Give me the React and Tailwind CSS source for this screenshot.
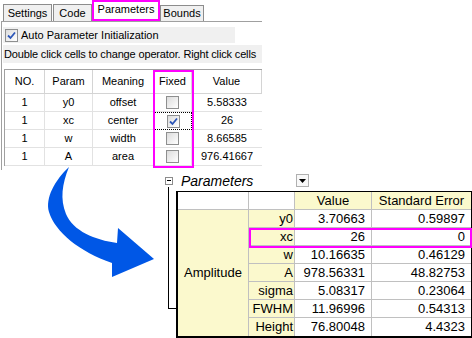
import React from 'react'

const leftRows = [
  { no: 1, param: 'y0', meaning: 'offset', checked: false, value: '5.58333' },
  { no: 1, param: 'xc', meaning: 'center', checked: true, value: '26' },
  { no: 1, param: 'w', meaning: 'width', checked: false, value: '8.66585' },
  { no: 1, param: 'A', meaning: 'area', checked: false, value: '976.41667' },
]

const rightRows = [
  ['y0', '3.70663', '0.59897'],
  ['xc', '26', '0'],
  ['w', '10.16635', '0.46129'],
  ['A', '978.56331', '48.82753'],
  ['sigma', '5.08317', '0.23064'],
  ['FWHM', '11.96996', '0.54313'],
  ['Height', '76.80048', '4.4323'],
]

function CheckBox({ checked }) {
  return (
    <div className="w-[13px] h-[13px] border border-[#8e8f8f] bg-gradient-to-br from-[#dcdcdc] to-[#ffffff] flex items-center justify-center">
      {checked && (
        <svg width="9" height="9" viewBox="0 0 9 9">
          <path d="M1 4.5 L3.5 7 L8 1.5" fill="none" stroke="#2c56b8" strokeWidth="1.8" />
        </svg>
      )}
    </div>
  )
}

function Tab({ label, className }) {
  return (
    <div className={`flex items-center justify-center text-[11px] text-black border border-b-0 border-[#8c8c8c] bg-[#f0f0f0] ${className}`}>
      {label}
    </div>
  )
}

export default function App() {
  return (
    <div className="relative w-[472px] h-[338px] overflow-hidden bg-white font-['Liberation_Sans',Arial,sans-serif]">
      {/* dialog */}
      <div className="w-[262px] h-[170px]">
        <div className="flex items-end h-[21px] pl-[3px]">
          <Tab label="Settings" className="w-[49px] h-[17px]" />
          <Tab label="Code" className="ml-[1px] w-[39px] h-[17px]" />
          <div className="w-[68px] h-[21px] border-2 border-[#ff00ff] bg-white flex items-center justify-center text-[11px] pb-[2px]">Parameters</div>
          <Tab label="Bounds" className="w-[44px] h-[16px]" />
        </div>
        <div className="h-[149px] border-t border-l border-[#a0a0a0] ml-[1px]">
          <div className="ml-[1px] mt-[5px] w-[232px] h-[16px] bg-[#f0f0f0] flex items-center text-[11px]">
            <div className="ml-[2px]"><CheckBox checked /></div>
            <span className="ml-[3px]">Auto Parameter Initialization</span>
          </div>
          <div className="ml-[1px] mt-[2px] h-[18px] bg-[#f0f0f0] flex items-center text-[11px] tracking-[-0.15px] whitespace-nowrap overflow-hidden pl-[1px]">
            Double click cells to change operator. Right click cells
          </div>
          <div className="mt-[6px] ml-[2px] border-t border-l border-[#a0a0a0] grid grid-cols-[40px_48px_61px_38px_70px] text-[11px]">
            {['NO.', 'Param', 'Meaning', 'Fixed', 'Value'].map((h) => (
              <div key={h} className="h-[24px] flex items-center justify-center border-r border-b border-[#d4d4d4] bg-white">{h}</div>
            ))}
            {leftRows.map((r) => (
              <React.Fragment key={r.param}>
                <div className="h-[18px] flex items-center justify-center border-r border-b border-[#e2e2e2]">{r.no}</div>
                <div className="h-[18px] flex items-center justify-center border-r border-b border-[#e2e2e2]">{r.param}</div>
                <div className="h-[18px] flex items-center justify-center border-r border-b border-[#e2e2e2]">{r.meaning}</div>
                <div className={`h-[18px] flex items-center justify-center border-b ${r.checked ? 'border border-dotted border-black' : 'border-r border-[#e2e2e2]'}`}>
                  <CheckBox checked={r.checked} />
                </div>
                <div className="h-[18px] flex items-center justify-center border-b border-[#e2e2e2]">{r.value}</div>
              </React.Fragment>
            ))}
          </div>
        </div>
      </div>

      {/* report table */}
      <div className="flex">
        <div className="w-[160px] shrink-0" />
        <div className="relative w-[312px]">
          <div className="flex items-center h-[21px]">
            <div className="ml-[5px] w-[8px] h-[8px] border border-[#8c8c8c] bg-white flex items-center justify-center">
              <div className="w-[4px] h-[1px] bg-black" />
            </div>
            <span className="ml-[8px] text-[14px] italic text-black leading-none">Parameters</span>
            <div className="ml-[43px] w-[13px] h-[13px] border border-[#b0b0b0] bg-[#f8f8f8] flex items-center justify-center">
              <svg width="7" height="4" viewBox="0 0 7 4"><path d="M0 0 H7 L3.5 4 Z" fill="#000" /></svg>
            </div>
          </div>
          <div className="absolute left-[8px] top-[17px] w-[8px] h-[122px] border-l border-b border-black" />
          <div className="ml-[16px] w-[296px] border-t border-l-2 border-b-2 border-r border-black grid grid-cols-[71px_46px_77px_99px] text-[13px] text-black">
            <div className="h-[18px] bg-white border-r border-b border-[#c0c0c0]" />
            <div className="h-[18px] bg-white border-r border-b border-[#c0c0c0]" />
            <div className="h-[18px] bg-[#fbf9cd] border-r border-b border-[#c0c0c0] flex items-center justify-center">Value</div>
            <div className="h-[18px] bg-[#fbf9cd] border-b border-[#c0c0c0] flex items-center justify-center">Standard Error</div>
            <div className="row-span-7 bg-[#fbf9cd] border-r border-[#c0c0c0] flex items-center justify-center">Amplitude</div>
            {rightRows.map(([p, v, e], i) => (
              <React.Fragment key={p}>
                <div className={`h-[18px] bg-[#fbf9cd] border-r border-[#c0c0c0] flex items-center justify-end pr-[1px] ${i < 6 ? 'border-b' : ''}`}>{p}</div>
                <div className={`h-[18px] bg-white border-r border-[#c0c0c0] flex items-center justify-end pr-[6px] ${i < 6 ? 'border-b' : ''}`}>{v}</div>
                <div className={`h-[18px] bg-white border-[#c0c0c0] flex items-center justify-end pr-[6px] ${i < 6 ? 'border-b' : ''}`}>{e}</div>
              </React.Fragment>
            ))}
          </div>
          <div className="absolute left-[89px] top-[58px] w-[223px] h-[20px] border-2 border-[#ff00ff]" />
        </div>
      </div>

      {/* Fixed column highlight */}
      <div className="absolute left-[153px] top-[70px] w-[41px] h-[98px] border-2 border-[#ff00ff]" />

      {/* curved arrow */}
      <svg className="absolute left-0 top-0 pointer-events-none" width="472" height="338" viewBox="0 0 472 338">
        <path
          d="M69 167 C55 180 45 198 49 212 C55 232 80 252 112 263 L112 277 L154 259 L118 228 L117 243 C95 240 73 231 66 214 C60 199 62 184 69 167 Z"
          fill="#0057e6"
        />
      </svg>
    </div>
  )
}
